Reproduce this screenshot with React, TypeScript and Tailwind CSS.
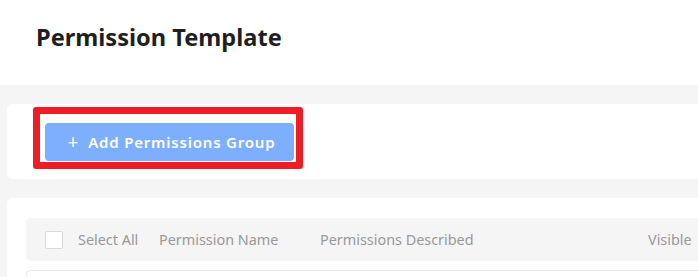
import React from "react";

export default function App() {
  return (
    <div className="w-[698px] h-[277px] overflow-hidden bg-[#f5f5f5]" style={{ fontFamily: '"Noto Sans", "Open Sans", sans-serif' }}>
      <div className="h-[85px] bg-white pl-[36px] pt-[19px]">
        <h1 className="text-[23.6px] font-bold text-[#1f1f1f] leading-[36px]">Permission Template</h1>
      </div>
      <div className="pl-[7px] pt-[19px]">
        <div className="relative h-[75px] rounded-l-[5px] bg-white pl-[38px] pt-[19px]">
          <button className="flex h-[38px] w-[249px] items-center justify-center gap-[9px] rounded-[4px] bg-[#7eafff] pl-[4px] text-[15px] font-semibold tracking-[0.8px] text-white">
            <span className="text-[19px] font-normal leading-none">+</span>
            <span>Add Permissions Group</span>
          </button>
          <div className="absolute left-[26px] top-[3px] h-[62px] w-[270px] rounded-[3px] border-[7px] border-[#ee1c25]" />
        </div>
      </div>
      <div className="pl-[7px] pt-[19px]">
        <div className="h-[100px] rounded-tl-[5px] bg-white pl-[19px] pt-[20px]">
          <div className="flex h-[43px] items-center rounded-l-[5px] bg-[#f5f5f5] text-[14.4px] text-[#999]">
            <div className="ml-[19px] h-[18px] w-[18px] rounded-[2px] border border-[#d9d9d9] bg-white" />
            <span className="ml-[15px] w-[81px]">Select All</span>
            <span className="w-[161px]">Permission Name</span>
            <span className="w-[328px]">Permissions Described</span>
            <span>Visible</span>
          </div>
          <div className="mt-[9px] h-[20px] rounded-tl-[5px] border-l border-t border-[#e8e8e8]" />
        </div>
      </div>
    </div>
  );
}
